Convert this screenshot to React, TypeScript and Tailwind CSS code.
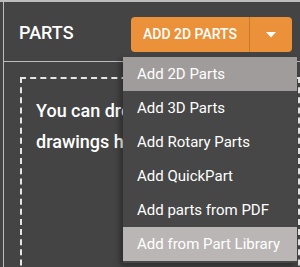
const items = [
  { label: "Add 2D Parts", bg: "bg-[#a09c9b]" },
  { label: "Add 3D Parts", bg: "" },
  { label: "Add Rotary Parts", bg: "" },
  { label: "Add QuickPart", bg: "" },
  { label: "Add parts from PDF", bg: "" },
  { label: "Add from Part Library", bg: "bg-[#bab6b5]" },
];

export default function App() {
  return (
    <div
      className="relative w-[300px] h-[267px] overflow-hidden bg-[#444444] border-t-2 border-[#bdbdbd] pl-[3px]"
      style={{ fontFamily: "Roboto, 'Liberation Sans', sans-serif" }}
    >
      <div className="h-full border-l border-[#bdbdbd]">
        <div className="h-[60px] flex items-center justify-between border-b border-[#bdbdbd] pl-[15px] pr-[8px]">
          <span className="text-white text-[18px] font-medium leading-none mt-[2px]">PARTS</span>
          <div className="flex h-[35px] w-[161px] mt-[6px] rounded-[4px] bg-[#ea913a] text-white">
            <div className="flex-1 flex items-center justify-center text-[14px] font-medium border-r border-[#c77a2c]">
              ADD 2D PARTS
            </div>
            <div className="w-[42px] flex items-center justify-center">
              <svg width="10" height="6" viewBox="0 0 10 6">
                <path d="M0 0 L10 0 L5 5.5 Z" fill="white" />
              </svg>
            </div>
          </div>
        </div>
        <div className="pt-[15px] pl-[16px]">
          <div className="h-[300px] border-2 border-dashed border-[#e6e6e6] pl-[14px] pt-[16px]">
            <p className="text-white text-[18px] font-medium leading-[31px] whitespace-nowrap">
              You can drop your
              <br />
              drawings here
            </p>
          </div>
        </div>
      </div>
      <div className="absolute left-[123px] top-[55px] w-[174px] bg-[#474747] shadow-[-3px_3px_6px_rgba(0,0,0,0.35)] pb-[2px]">
        {items.map((it) => (
          <div
            key={it.label}
            className={`h-[34px] flex items-center pl-[14px] text-white text-[15px] whitespace-nowrap ${it.bg}`}
          >
            {it.label}
          </div>
        ))}
      </div>
    </div>
  );
}
